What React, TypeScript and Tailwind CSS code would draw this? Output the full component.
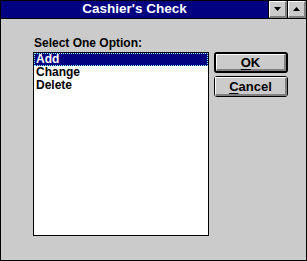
import React from "react";

const font = { fontFamily: '"Liberation Sans", Arial, sans-serif' };

function CaptionButton({ dir }: { dir: "up" | "down" }) {
  return (
    <div className="flex h-full w-[19px] border-l border-black">
      <div className="flex h-full w-full items-center justify-center border-t border-l border-white border-r-2 border-b-2 border-r-[#808080] border-b-[#808080] bg-[#cbcbcb]">
        <svg width="7" height="4" viewBox="0 0 7 4">
          {dir === "down" ? (
            <polygon points="0,0 7,0 3.5,4" fill="#000" />
          ) : (
            <polygon points="0,4 7,4 3.5,0" fill="#000" />
          )}
        </svg>
      </div>
    </div>
  );
}

function DialogButton({ label, hot, isDefault }: { label: string; hot: string; isDefault?: boolean }) {
  const rest = label.slice(hot.length);
  return (
    <div
      className={`h-[21px] w-[74px] rounded-[3px] border-black ${isDefault ? "border-2" : "border"}`}
    >
      <div className="flex h-full w-full items-center justify-center border-t border-l border-white border-r-2 border-b-2 border-r-[#808080] border-b-[#808080] bg-[#cbcbcb] text-[13px] font-bold leading-none text-black">
        <span>
          <span className="underline underline-offset-2">{hot}</span>
          {rest}
        </span>
      </div>
    </div>
  );
}

export default function App() {
  const items = ["Add", "Change", "Delete"];
  return (
    <div style={font} className="flex h-[261px] w-[307px] flex-col border border-black bg-[#cbcbcb]">
      <div className="flex h-[18px] shrink-0 border-b border-black">
        <div className="flex flex-1 items-center justify-center bg-[#000080] text-[13.5px] font-bold text-white">
          Cashier's Check
        </div>
        <CaptionButton dir="down" />
        <CaptionButton dir="up" />
      </div>

      <div className="flex flex-1 pl-[32px] pt-[17px]">
        <div className="flex flex-col">
          <div className="h-[14px] pl-[1px] text-[12px] font-bold leading-[14px] text-black">
            Select One Option:
          </div>
          <div className="mt-[2px] h-[184px] w-[176px] border border-black bg-white">
            {items.map((item, i) => (
              <div
                key={item}
                className={`h-[13px] pl-[1px] text-[12px] font-bold leading-[11px] ${
                  i === 0
                    ? "border border-dotted border-[#80ffff] bg-[#000080] text-white"
                    : "border border-transparent text-black"
                }`}
              >
                {item}
              </div>
            ))}
          </div>
        </div>

        <div className="ml-[5px] mt-[16px] flex flex-col gap-[3px]">
          <DialogButton label="OK" hot="O" isDefault />
          <DialogButton label="Cancel" hot="C" />
        </div>
      </div>
    </div>
  );
}
